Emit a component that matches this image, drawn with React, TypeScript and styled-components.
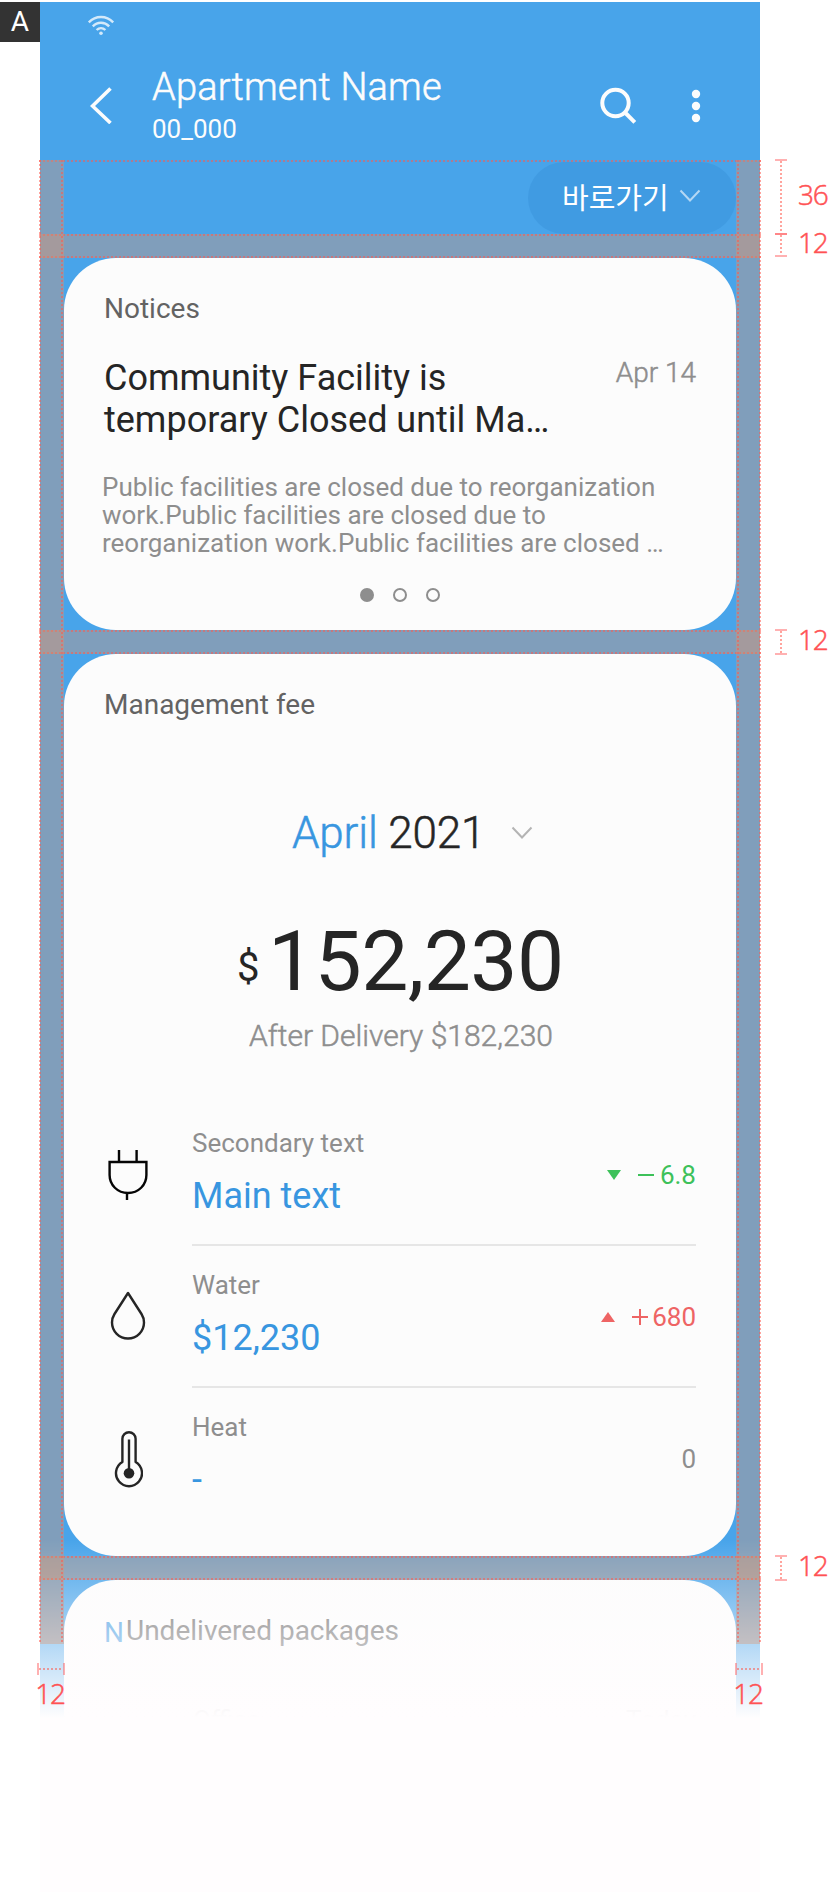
import React from "react";
import styled, { createGlobalStyle, css } from "styled-components";

const GlobalStyle = createGlobalStyle`
  *, *::before, *::after { box-sizing: border-box; }
  body { margin: 0; background: #fff; font-family: Roboto, "Noto Sans CJK KR", sans-serif; }
`;

const line = "rgba(255, 88, 76, 0.55)";
const band = "rgba(226, 150, 107, 0.37)";

/* Roboto Light thickened slightly, between Light and Regular. */
const semiLight = css`
  font-weight: 300;
  -webkit-text-stroke: 0.5px currentColor;
`;

const Board = styled.div`
  display: grid;
  grid-template-columns: 40px 720px 80px;
  width: 840px;
  height: 1892px;
  padding-top: 2px;
  overflow: hidden;
`;

const Tag = styled.div`
  display: flex;
  align-items: center;
  justify-content: center;
  width: 40px;
  height: 40px;
  background: #333;
  color: #fff;
  font-size: 28px;
  line-height: 40px;
`;

const Column = styled.div`
  position: relative;
  background: #fffdfe;
`;

const Phone = styled.div`
  position: relative;
  height: 1716px;
  overflow: hidden;
  background: #48a4ea;
`;

const StatusBar = styled.div`
  display: flex;
  height: 48px;
  padding: 13px 0 0 47px;
`;

const AppBar = styled.header`
  display: flex;
  height: 112px;
  padding: 0 59px 0 48px;
  color: #fcfcfc;
`;

const Titles = styled.div`
  flex: 1;
  padding: 15px 0 0 40px;
`;

const Title = styled.h1`
  margin: 0;
  font-size: 38px;
  ${semiLight}
  line-height: 45px;
  letter-spacing: 0.15px;
`;

const Unit = styled.div`
  font-size: 26px;
  line-height: 30px;
  margin-top: 4px;
`;

const BackIcon = styled.svg`
  margin: 36px 0 0 2px;
`;

const SearchIcon = styled.svg`
  margin-top: 36px;
`;

const MoreIcon = styled.svg`
  margin: 38px 0 0 54px;
`;

const ShortcutRow = styled.div`
  display: flex;
  justify-content: flex-end;
  height: 96px;
  padding-right: 24px;
`;

const Pill = styled.button`
  display: flex;
  align-items: center;
  gap: 10px;
  width: 208px;
  height: 72px;
  padding: 0 0 4px 34px;
  border: 0;
  border-radius: 36px;
  background: #409be2;
  color: #fff;
  font-family: "Noto Sans CJK KR", sans-serif;
  font-size: 29px;
  font-weight: 400;
  line-height: 40px;
`;

const Cards = styled.main`
  display: flex;
  flex-direction: column;
  gap: 24.5px;
  padding: 0 24px;
`;

const Card = styled.section<{ $h: number }>`
  flex: none;
  height: ${(p) => p.$h}px;
  padding: 34px 40px 0;
  border-radius: 52px;
  background: #fcfcfc;
`;

const CardTitle = styled.h2`
  display: flex;
  margin: 0;
  color: #636363;
  font-size: 28px;
  font-weight: 400;
  line-height: 34px;
`;

const NewMark = styled.span`
  position: relative;
  top: 2px;
  width: 22px;
  color: #3896e0;
`;

const Headline = styled.div`
  display: flex;
  justify-content: space-between;
  margin-top: 31px;
`;

const NoticeTitle = styled.h3`
  margin: 0;
  color: #252525;
  font-size: 36px;
  font-weight: 400;
  line-height: 42px;
  white-space: nowrap;
`;

const NoticeDate = styled.time`
  color: #8e8e8e;
  font-size: 28px;
  ${semiLight}
  line-height: 32px;
`;

const NoticeBody = styled.p`
  margin: 32px 0 0 -2px;
  color: #8e8e8e;
  font-size: 26px;
  line-height: 28px;
  white-space: nowrap;
`;

const Dots = styled.div`
  display: flex;
  justify-content: center;
  gap: 19px;
  margin-top: 31px;
`;

const Dot = styled.i<{ $on?: boolean }>`
  width: 14px;
  height: 14px;
  border: 2.5px solid #8e8e8e;
  border-radius: 50%;
  ${(p) => p.$on && css`background: #8e8e8e;`}
`;

const Month = styled.div`
  display: flex;
  align-items: center;
  justify-content: space-between;
  width: 241px;
  margin: 85px 0 0 188px;
  color: #252525;
  font-size: 44px;
  ${semiLight}
  line-height: 52px;
  letter-spacing: -0.15px;
  white-space: nowrap;

  em { color: #3896e0; font-style: normal; }
`;

const Amount = styled.div`
  display: flex;
  align-items: baseline;
  margin: 54px 0 0 133px;
  color: #252525;
  font-size: 84px;
  line-height: 98px;
  letter-spacing: -0.6px;

  small {
    position: relative;
    top: -9px;
    width: 31px;
    font-size: 40px;
    line-height: 1;
  }
`;

const After = styled.div`
  margin: 8px 0 0 2px;
  color: #8e8e8e;
  font-size: 30px;
  ${semiLight}
  line-height: 34px;
  text-align: center;
`;

const Fees = styled.div`
  margin-top: 51px;
`;

const FeeRow = styled.div`
  display: flex;
  height: 142px;
`;

const FeeIcon = styled.div`
  display: flex;
  align-items: center;
  justify-content: center;
  width: 48px;
  height: 142px;
  margin-right: 40px;
`;

const FeeInfo = styled.div<{ $last?: boolean }>`
  display: flex;
  justify-content: space-between;
  flex: 1;
  padding-top: 24px;
  border-bottom: ${(p) => (p.$last ? "0" : "2px solid #e6e6e6")};
`;

const FeeLabel = styled.div`
  color: #8e8e8e;
  font-size: 26px;
  line-height: 30px;
`;

const FeeValue = styled.div`
  margin-top: 17px;
  color: #3896e0;
  font-size: 36px;
  line-height: 42px;
`;

const Change = styled.div<{ $color: string }>`
  display: flex;
  align-items: center;
  height: 30px;
  margin-top: 32px;
  color: ${(p) => p.$color};
  font-size: 26px;
  line-height: 30px;
`;

const Arrow = styled.svg`
  margin-right: 17px;
`;

const Sign = styled.svg<{ $gap: number }>`
  margin-right: ${(p) => p.$gap}px;
`;

const PackageRow = styled.div`
  display: flex;
  justify-content: space-between;
  padding: 57px 0 0 89px;
  color: #8e8e8e;
  font-size: 26px;
  line-height: 30px;
`;

const Fade = styled.div`
  position: absolute;
  inset: auto 0 0;
  height: 178px;
  background: linear-gradient(rgba(255, 253, 254, 0), #fffdfe);
`;

const dotsX = css`
  background-image: repeating-linear-gradient(90deg, ${line} 0 2px, transparent 2px 4px);
`;
const dotsY = css`
  background-image: repeating-linear-gradient(${line} 0 2px, transparent 2px 4px);
`;

const HLine = styled.div<{ $y: number }>`
  position: absolute;
  left: -1px;
  right: -1px;
  top: ${(p) => p.$y}px;
  height: 2px;
  ${dotsX}
`;

/* Spacing overlay between two cards. */
const HBand = styled.div<{ $y: number; $h: number }>`
  position: absolute;
  left: 0;
  right: 0;
  top: ${(p) => p.$y}px;
  height: ${(p) => p.$h}px;
  background: ${band};

  &::before, &::after {
    content: "";
    position: absolute;
    left: -1px;
    right: -1px;
    height: 2px;
    ${dotsX}
  }
  &::before { top: 0; }
  &::after { bottom: 0; }
`;

/* Side margin overlay. */
const VBand = styled.div<{ $right?: boolean }>`
  position: absolute;
  top: 158px;
  ${(p) => (p.$right ? "right: 0;" : "left: 0;")}
  width: 24px;
  height: 1484px;
  background: ${band};

  &::before, &::after {
    content: "";
    position: absolute;
    top: 0;
    bottom: 0;
    width: 2px;
    ${dotsY}
  }
  &::before { left: ${(p) => (p.$right ? 1 : -1)}px; }
  &::after { right: ${(p) => (p.$right ? -1 : 1)}px; }
`;

const numberStyle = css`
  color: #ff5254;
  font-family: "Open Sans", "Noto Sans", sans-serif;
  ${semiLight}
  font-size: 28px;
  line-height: 30px;
  letter-spacing: -1.2px;
`;

const WidthMark = styled.div<{ $x: number }>`
  position: absolute;
  left: ${(p) => p.$x}px;
  top: 1661px;
  display: flex;
  flex-direction: column;
  align-items: center;
  width: 28px;
  ${numberStyle}

  &::before {
    content: "";
    width: 28px;
    height: 12px;
    margin-bottom: 3px;
    border: solid rgba(255, 82, 84, 0.45);
    border-width: 0 2px;
    ${dotsX}
    background-size: 100% 2px;
    background-position: 0 5px;
    background-repeat: no-repeat;
  }
`;

const WidthValue = styled.span`
  margin-left: -2px;
`;

const Rail = styled.aside`
  padding: 157px 0 0 15px;
`;

const HeightMark = styled.div<{ $h: number; $gap?: number }>`
  display: flex;
  align-items: center;
  gap: 11px;
  height: ${(p) => p.$h}px;
  margin-top: ${(p) => p.$gap ?? 0}px;
  ${numberStyle}

  &::before {
    content: "";
    flex: none;
    width: 12px;
    height: 100%;
    border: solid rgba(255, 82, 84, 0.45);
    border-width: 2px 0;
    ${dotsY}
    background-size: 2px 100%;
    background-position: 5px 0;
    background-repeat: no-repeat;
  }
`;

const HeightValue = styled.span`
  padding-bottom: 6px;
`;

const Chevron = ({ color }: { color: string }) => (
  <svg width="22" height="14" viewBox="0 0 22 14" fill="none" stroke={color} strokeWidth="2">
    <path d="M1.5 1.5 11 11.5 20.5 1.5" />
  </svg>
);

const Plug = () => (
  <svg width="40" height="50" viewBox="0 0 40 50" fill="none" stroke="#050505" strokeWidth="2.4">
    <path d="M11 0V11M28.6 0V11M1.6 12H38.4V25C38.4 35 30.5 43 20 43S1.6 35 1.6 25ZM19 43V50" />
  </svg>
);

const Drop = () => (
  <svg width="36" height="52" viewBox="0 0 36 52" fill="none" stroke="#252525" strokeWidth="2.4">
    <path d="M18 2 4.5 23C2.600 26 2 28.500 2 31.500A16 16 0 0 0 34 31.500C34 28.500 33.400 26 31.500 23Z" strokeLinejoin="round" />
  </svg>
);

const Thermometer = () => (
  <svg width="30" height="58" viewBox="0 0 30 58" fill="none" stroke="#252525" strokeWidth="2.400">
    <path d="M9.400 32V8.800A6.600 6.600 0 0 1 22.600 8.800V32A13 13 0 1 1 9.400 32Z" strokeLinejoin="round" />
    <path d="M16 9.500V43" />
    <circle cx="16" cy="43.200" r="5.300" fill="#252525" stroke="none" />
  </svg>
);

export default function App() {
  return (
    <>
      <GlobalStyle />
      <Board>
        <Tag>A</Tag>
        <Column>
          <Phone>
            <StatusBar>
              <svg width="28" height="21" viewBox="0 0 28 21" fill="none" stroke="#d3e9fa" strokeWidth="2.400">
                <path d="M1.800 7.400C8.700.200 19.300.200 26.200 7.400M5.800 11.300C10.500 6.500 17.500 6.500 22.200 11.300M9.600 15C12.200 12.500 15.800 12.500 18.400 15" />
                <circle cx="14" cy="18.300" r="1.800" fill="#d3e9fa" stroke="none" />
              </svg>
            </StatusBar>
            <AppBar>
              <BackIcon width="22" height="38" viewBox="0 0 22 38" fill="none" stroke="#fcfcfc" strokeWidth="3.600">
                <path d="M20.500 2.500 2.500 20 20.500 37" />
              </BackIcon>
              <Titles>
                <Title>Apartment Name</Title>
                <Unit>00_000</Unit>
              </Titles>
              <SearchIcon width="38" height="38" viewBox="0 0 38 38" fill="none" stroke="#fcfcfc" strokeWidth="4">
                <circle cx="16.500" cy="17" r="13.200" />
                <path d="M25.500 26 35.800 36.300" />
              </SearchIcon>
              <MoreIcon width="10" height="34" viewBox="0 0 10 34" fill="#fcfcfc" overflow="visible">
                <circle cx="5" cy="6" r="4.200" />
                <circle cx="5" cy="18" r="4.200" />
                <circle cx="5" cy="30" r="4.200" />
              </MoreIcon>
            </AppBar>
            <ShortcutRow>
              <Pill>
                바로가기
                <Chevron color="#b3d7f4" />
              </Pill>
            </ShortcutRow>
            <Cards>
              <Card $h={371.5}>
                <CardTitle>Notices</CardTitle>
                <Headline>
                  <NoticeTitle>
                    Community Facility is
                    <br />
                    temporary Closed until Ma…
                  </NoticeTitle>
                  <NoticeDate>Apr 14</NoticeDate>
                </Headline>
                <NoticeBody>
                  Public facilities are closed due to reorganization
                  <br />
                  work.Public facilities are closed due to
                  <br />
                  reorganization work.Public facilities are closed …
                </NoticeBody>
                <Dots>
                  <Dot $on />
                  <Dot />
                  <Dot />
                </Dots>
              </Card>
              <Card $h={901.5}>
                <CardTitle>Management fee</CardTitle>
                <Month>
                  <span>
                    <em>April</em> 2021
                  </span>
                  <Chevron color="#b4b4b4" />
                </Month>
                <Amount>
                  <small>$</small>152,230
                </Amount>
                <After>After Delivery $182,230</After>
                <Fees>
                  <FeeRow>
                    <FeeIcon>
                      <Plug />
                    </FeeIcon>
                    <FeeInfo>
                      <div>
                        <FeeLabel>Secondary text</FeeLabel>
                        <FeeValue>Main text</FeeValue>
                      </div>
                      <Change $color="#3dc15a">
                        <Arrow width="14" height="10" viewBox="0 0 14 10" fill="currentColor">
                          <path d="M0 0H14L7 10Z" />
                        </Arrow>
                        <Sign $gap={6} width="16" height="16" viewBox="0 0 16 16" stroke="currentColor" strokeWidth="2">
                          <path d="M0 8H16" />
                        </Sign>
                        6.8
                      </Change>
                    </FeeInfo>
                  </FeeRow>
                  <FeeRow>
                    <FeeIcon>
                      <Drop />
                    </FeeIcon>
                    <FeeInfo>
                      <div>
                        <FeeLabel>Water</FeeLabel>
                        <FeeValue>$12,230</FeeValue>
                      </div>
                      <Change $color="#ee6464">
                        <Arrow width="14" height="10" viewBox="0 0 14 10" fill="currentColor">
                          <path d="M0 10H14L7 0Z" />
                        </Arrow>
                        <Sign $gap={4} width="16" height="16" viewBox="0 0 16 16" stroke="currentColor" strokeWidth="2">
                          <path d="M0 8H16M8 0V16" />
                        </Sign>
                        680
                      </Change>
                    </FeeInfo>
                  </FeeRow>
                  <FeeRow>
                    <FeeIcon>
                      <Thermometer />
                    </FeeIcon>
                    <FeeInfo $last>
                      <div>
                        <FeeLabel>Heat</FeeLabel>
                        <FeeValue>-</FeeValue>
                      </div>
                      <Change $color="#8e8e8e">0</Change>
                    </FeeInfo>
                  </FeeRow>
                </Fees>
              </Card>
              <Card $h={300}>
                <CardTitle>
                  <NewMark>N</NewMark>Undelivered packages
                </CardTitle>
                <PackageRow>
                  <span>Office</span>
                  <span>Today</span>
                </PackageRow>
              </Card>
            </Cards>
            <Fade />
          </Phone>
          <HLine $y={158} />
          <HBand $y={232} $h={24} />
          <HBand $y={627.5} $h={24.5} />
          <HBand $y={1553.5} $h={24.5} />
          <VBand />
          <VBand $right />
          <WidthMark $x={-3}>
            <WidthValue>12</WidthValue>
          </WidthMark>
          <WidthMark $x={695}>
            <WidthValue>12</WidthValue>
          </WidthMark>
        </Column>
        <Rail>
          <HeightMark $h={76}>
            <HeightValue>36</HeightValue>
          </HeightMark>
          <HeightMark $h={24} $gap={-2}>
            <HeightValue>12</HeightValue>
          </HeightMark>
          <HeightMark $h={26} $gap={372}>
            <HeightValue>12</HeightValue>
          </HeightMark>
          <HeightMark $h={26} $gap={900}>
            <HeightValue>12</HeightValue>
          </HeightMark>
        </Rail>
      </Board>
    </>
  );
}
